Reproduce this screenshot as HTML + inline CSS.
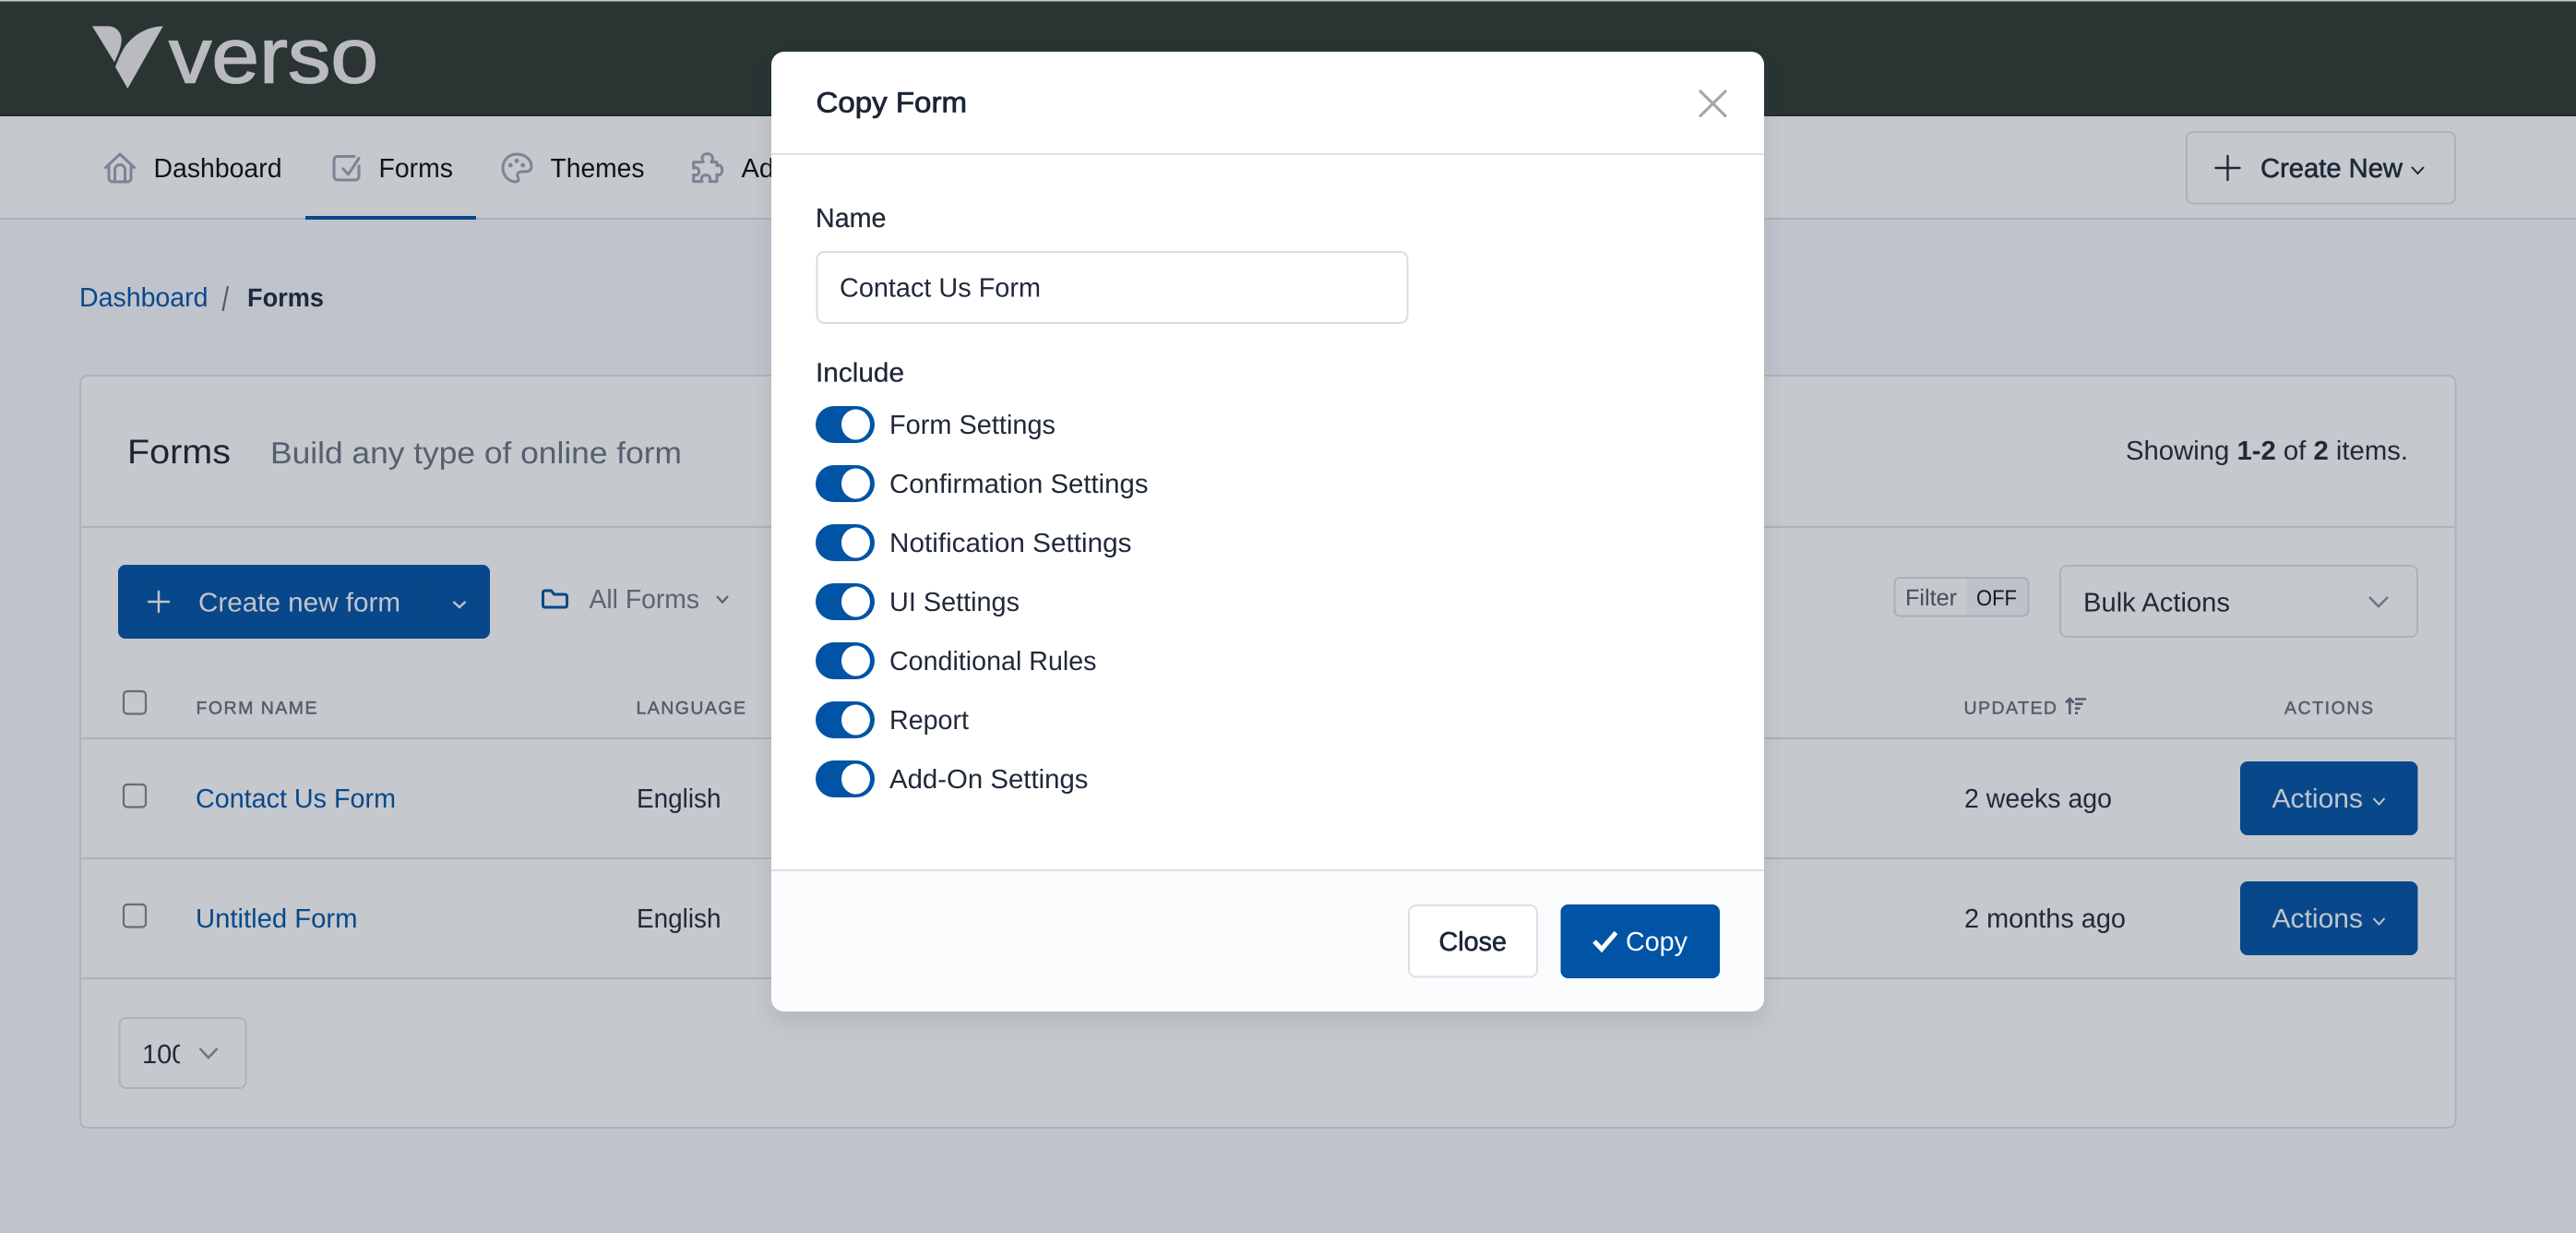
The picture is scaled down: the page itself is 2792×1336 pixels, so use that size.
<!DOCTYPE html>
<html lang="en">
<head>
<meta charset="utf-8">
<title>Verso - Forms</title>
<style>
html,body{margin:0;padding:0;background:#bfc3cc}
body{width:2792px;height:1336px;overflow:hidden;position:relative;font-family:"Liberation Sans",Arial,sans-serif}
svg{position:absolute;left:0;top:0;display:block}
svg text{font-family:"Liberation Sans",Arial,sans-serif;white-space:pre;text-rendering:geometricPrecision}
.m{stroke-width:.6px}
.modal{position:absolute;left:836px;top:56px;width:1076px;height:1040px;background:#fff;border-radius:14px;overflow:hidden;box-shadow:0 12px 24px rgba(60,65,80,.12)}
.icon{fill:none;stroke:#7a8494;stroke-width:3;stroke-linecap:round;stroke-linejoin:round}
</style>
</head>
<body>
<svg width="2792" height="1336" viewBox="0 0 2792 1336" xmlns="http://www.w3.org/2000/svg">
  <defs>
    <clipPath id="c100"><rect x="150" y="1120" width="45" height="45"/></clipPath>
  </defs>
  <rect width="2792" height="1336" fill="#bfc3cc"/>

  <!-- header -->
  <rect width="2792" height="125" fill="#293433"/>
  <rect width="2792" height="1.5" fill="#c3c6ca"/>
  <rect y="124" width="2792" height="2" fill="#202b3a"/>
  <g transform="translate(80 10) scale(.33333)" fill="#b9bbbe">
    <path d="M60 55H112C140 55 156 78 155 102C154 125 142 150 132 172Z"/>
    <path d="M290 55C232 56 182 92 160 132C150 150 142 168 135 188L175 258Z"/>
  </g>
  <text x="183" y="89.500" font-size="85" fill="#b9bbbe" stroke="#b9bbbe" stroke-width="1.400" textLength="227" lengthAdjust="spacingAndGlyphs">verso</text>

  <!-- nav -->
  <rect y="126" width="2792" height="111" fill="#c5c8cd"/>
  <rect y="236" width="2792" height="2" fill="#adb2ba"/>
  <rect x="331" y="234" width="185" height="4" fill="#08488a"/>
  <path class="icon" d="M114.500 181.500L130 167L145.500 181.500M118 178V193a4 4 0 0 0 4 4H138a4 4 0 0 0 4-4V178M124.500 197V184a5.500 5.500 0 0 1 11 0V197"/>
  <text x="166.500" y="192" font-size="29" fill="#111318" textLength="139" lengthAdjust="spacingAndGlyphs">Dashboard</text>
  <path class="icon" d="M384 169.500H366a4 4 0 0 0-4 4V191a4 4 0 0 0 4 4H385a4 4 0 0 0 4-4V180"/>
  <path class="icon" stroke-width="2.500" d="M372 183L377.500 189L389 171.500"/>
  <text x="410.500" y="192" font-size="29" fill="#111318" textLength="80.500" lengthAdjust="spacingAndGlyphs">Forms</text>
  <path class="icon" d="M560 167C551 167 545 174 545 182C545 190 551 197 559 197C563 197 562 193 561 191C560 187 563 186 566 186L570 186C573 186 576 184 576 180.500C576 172 568 167 560 167Z"/>
  <circle cx="553.300" cy="179" r="2.400" fill="#7a8494"/><circle cx="560" cy="174.300" r="2.400" fill="#7a8494"/><circle cx="566.700" cy="179" r="2.400" fill="#7a8494"/>
  <text x="596.500" y="192" font-size="29" fill="#111318" textLength="102" lengthAdjust="spacingAndGlyphs">Themes</text>
  <g transform="translate(535 155) scale(.33333)">
    <path class="icon" style="stroke-width:9" d="M665 62H682C672 45 682 35 695 35C708 35 718 45 708 62H726V74C735 68 743 76 743 88C743 100 735 108 726 102V125H702C708 112 700 104 690 104C680 104 672 112 678 125H650V103C662 108 668 100 668 92C668 84 660 76 650 82V62Z"/>
  </g>
  <text x="803.500" y="192" font-size="29" fill="#111318">Add-Ons</text>

  <!-- create new -->
  <rect x="2370" y="143" width="291" height="77.500" rx="7" fill="#c5c8cd" stroke="#adb2ba" stroke-width="2"/>
  <path d="M2414.500 169V195M2401.500 182H2427.500" stroke="#1f2937" stroke-width="2.400" stroke-linecap="round" fill="none"/>
  <text x="2450" y="192" font-size="29" fill="#1e2838" class="m" stroke="#1e2838" textLength="154" lengthAdjust="spacingAndGlyphs">Create New</text>
  <path d="M2614 181L2620.500 188L2627 181" fill="none" stroke="#1f2937" stroke-width="2"/>

  <!-- breadcrumb -->
  <text x="86" y="332" font-size="29" fill="#08488a" textLength="139.500" lengthAdjust="spacingAndGlyphs">Dashboard</text>
  <path d="M247 310L241.500 337" stroke="#525c6b" stroke-width="2.200"/>
  <text x="268" y="332" font-size="28" font-weight="bold" fill="#1f2939" textLength="83" lengthAdjust="spacingAndGlyphs">Forms</text>

  <!-- card -->
  <rect x="87" y="407" width="2574.500" height="815" rx="8" fill="#c5c8cd" stroke="#adb2ba" stroke-width="2"/>
  <rect x="87" y="570" width="2574" height="2" fill="#adb2ba"/>
  <text x="138" y="502" font-size="37" fill="#1b2535" textLength="112" lengthAdjust="spacingAndGlyphs">Forms</text>
  <text x="293" y="502" font-size="33" fill="#555f6f" textLength="446" lengthAdjust="spacingAndGlyphs">Build any type of online form</text>
  <text x="2304" y="498" font-size="29" fill="#1f2939" textLength="306" lengthAdjust="spacingAndGlyphs">Showing <tspan font-weight="bold">1-2</tspan> of <tspan font-weight="bold">2</tspan> items.</text>

  <!-- toolbar -->
  <rect x="128" y="612" width="403" height="80" rx="8" fill="#08488a"/>
  <rect x="466" y="612" width="1" height="80" fill="#0a4480"/>
  <path d="M172 641V663M161 652H183" stroke="#c1c5cd" stroke-width="2.400" stroke-linecap="round" fill="none"/>
  <text x="215" y="662.500" font-size="29" fill="#c1c5cd" textLength="219" lengthAdjust="spacingAndGlyphs">Create new form</text>
  <path d="M491.500 652L498 658L504.500 652" fill="none" stroke="#c1c5cd" stroke-width="2.300"/>
  <path d="M588.500 642a2 2 0 0 1 2-2h7l3 4h12a2 2 0 0 1 2 2v10a2 2 0 0 1-2 2h-22a2 2 0 0 1-2-2z" fill="none" stroke="#08488a" stroke-width="3" stroke-linejoin="round"/>
  <text x="638.500" y="659" font-size="29" fill="#5c6472" textLength="119.500" lengthAdjust="spacingAndGlyphs">All Forms</text>
  <path d="M777 646L783 652.500L789 646" fill="none" stroke="#5c6472" stroke-width="2.300"/>

  <rect x="2053.500" y="626" width="145" height="41.500" rx="6" fill="#c5c8cd" stroke="#a9afb8" stroke-width="2"/>
  <path d="M2132 627H2192a5.500 5.500 0 0 1 5.500 5.500v28.500a5.500 5.500 0 0 1-5.500 5.500H2132Z" fill="#bdc2ca"/>
  <text x="2065" y="656" font-size="25" fill="#454e5c" textLength="56" lengthAdjust="spacingAndGlyphs">Filter</text>
  <text x="2142" y="656" font-size="24" fill="#15191f" textLength="44" lengthAdjust="spacingAndGlyphs">OFF</text>

  <rect x="2233" y="613" width="387" height="77" rx="7" fill="#c5c8cd" stroke="#adb2ba" stroke-width="2"/>
  <text x="2258" y="662.500" font-size="29" fill="#1f2939" textLength="159" lengthAdjust="spacingAndGlyphs">Bulk Actions</text>
  <path d="M2568 647L2578 657L2588 647" fill="none" stroke="#6e7786" stroke-width="2.600"/>

  <!-- table head -->
  <rect x="134" y="749" width="24" height="24.500" rx="4" fill="none" stroke="#686e78" stroke-width="2.200"/>
  <g font-size="19.500" fill="#535d6c" stroke="#535d6c" stroke-width=".5">
    <text x="212.500" y="773.500" textLength="131" lengthAdjust="spacing">FORM NAME</text>
    <text x="689.500" y="773.500" textLength="118.500" lengthAdjust="spacing">LANGUAGE</text>
    <text x="2128.500" y="773.500" textLength="100.500" lengthAdjust="spacing">UPDATED</text>
    <text x="2476" y="773.500" textLength="96" lengthAdjust="spacing">ACTIONS</text>
  </g>
  <path d="M2243.300 774V757.500M2239 761.500L2243.300 757L2247.600 761.500" fill="none" stroke="#535d6c" stroke-width="2.600"/>
  <path d="M2249 757.500H2261M2249 762.700H2257.500M2249 767.700H2254.500M2249 772.700H2252" fill="none" stroke="#535d6c" stroke-width="2.600"/>

  <!-- rows -->
  <rect x="87" y="799" width="2574" height="2" fill="#adb2ba"/>
  <rect x="87" y="929" width="2574" height="2" fill="#adb2ba"/>
  <rect x="87" y="1059" width="2574" height="2" fill="#adb2ba"/>

  <rect x="134" y="850" width="24" height="24.500" rx="4" fill="none" stroke="#686e78" stroke-width="2.200"/>
  <text x="212" y="875" font-size="29" fill="#08488a" textLength="217" lengthAdjust="spacingAndGlyphs">Contact Us Form</text>
  <text x="690" y="875" font-size="29" fill="#1f2939" textLength="91.500" lengthAdjust="spacingAndGlyphs">English</text>
  <text x="2129" y="875" font-size="29" fill="#1f2939" textLength="160" lengthAdjust="spacingAndGlyphs">2 weeks ago</text>
  <rect x="2428" y="825" width="192.500" height="80" rx="8" fill="#08488a"/>
  <text x="2462.500" y="875" font-size="29" fill="#c1c5cd" textLength="98.500" lengthAdjust="spacingAndGlyphs">Actions</text>
  <path d="M2572.500 865L2578.500 871.500L2584.500 865" fill="none" stroke="#c1c5cd" stroke-width="2"/>

  <rect x="134" y="980" width="24" height="24.500" rx="4" fill="none" stroke="#686e78" stroke-width="2.200"/>
  <text x="212" y="1005" font-size="29" fill="#08488a" textLength="175.500" lengthAdjust="spacingAndGlyphs">Untitled Form</text>
  <text x="690" y="1005" font-size="29" fill="#1f2939" textLength="91.500" lengthAdjust="spacingAndGlyphs">English</text>
  <text x="2129" y="1005" font-size="29" fill="#1f2939" textLength="175" lengthAdjust="spacingAndGlyphs">2 months ago</text>
  <rect x="2428" y="955" width="192.500" height="80" rx="8" fill="#08488a"/>
  <text x="2462.500" y="1005" font-size="29" fill="#c1c5cd" textLength="98.500" lengthAdjust="spacingAndGlyphs">Actions</text>
  <path d="M2572.500 995L2578.500 1001.500L2584.500 995" fill="none" stroke="#c1c5cd" stroke-width="2"/>

  <!-- page size -->
  <rect x="129.500" y="1103" width="137" height="76" rx="7" fill="#c5c8cd" stroke="#adb2ba" stroke-width="2"/>
  <text x="154" y="1152" font-size="29" fill="#1f2939" clip-path="url(#c100)">100</text>
  <path d="M216.500 1136L226 1146L235.500 1136" fill="none" stroke="#6e7786" stroke-width="2.600"/>
</svg>

<div class="modal">
  <svg width="1076" height="1040" viewBox="836 56 1076 1040" xmlns="http://www.w3.org/2000/svg">
    <rect x="836" y="943" width="1076" height="153" fill="#fbfcfe"/>
    <rect x="836" y="166" width="1076" height="2" fill="#dde1e7"/>
    <rect x="836" y="942" width="1076" height="2" fill="#dde1e7"/>

    <text x="884.500" y="121.500" font-size="31" fill="#1b2535" stroke="#1b2535" stroke-width=".8" textLength="163.500" lengthAdjust="spacingAndGlyphs">Copy Form</text>
    <path d="M1843 99L1870 125.500M1870 99L1843 125.500" stroke="#a3a7ae" stroke-width="3.200" stroke-linecap="round" fill="none"/>

    <text x="884" y="246" font-size="29" fill="#1f2939" stroke="#1f2939" stroke-width=".3" textLength="76.500" lengthAdjust="spacingAndGlyphs">Name</text>
    <rect x="885.500" y="273" width="640" height="77" rx="8" fill="#fff" stroke="#d8dce3" stroke-width="2"/>
    <text x="910" y="321.500" font-size="29" fill="#1f2939" textLength="218" lengthAdjust="spacingAndGlyphs">Contact Us Form</text>

    <text x="884" y="413.500" font-size="29" fill="#1f2939" stroke="#1f2939" stroke-width=".3" textLength="96" lengthAdjust="spacingAndGlyphs">Include</text>

    <g fill="#0153a5">
      <rect x="884" y="440" width="64" height="40" rx="20"/>
      <rect x="884" y="504" width="64" height="40" rx="20"/>
      <rect x="884" y="568" width="64" height="40" rx="20"/>
      <rect x="884" y="632" width="64" height="40" rx="20"/>
      <rect x="884" y="696" width="64" height="40" rx="20"/>
      <rect x="884" y="760" width="64" height="40" rx="20"/>
      <rect x="884" y="824" width="64" height="40" rx="20"/>
    </g>
    <g fill="#fff">
      <ellipse cx="927.500" cy="460" rx="15.500" ry="16.500"/>
      <ellipse cx="927.500" cy="524" rx="15.500" ry="16.500"/>
      <ellipse cx="927.500" cy="588" rx="15.500" ry="16.500"/>
      <ellipse cx="927.500" cy="652" rx="15.500" ry="16.500"/>
      <ellipse cx="927.500" cy="716" rx="15.500" ry="16.500"/>
      <ellipse cx="927.500" cy="780" rx="15.500" ry="16.500"/>
      <ellipse cx="927.500" cy="844" rx="15.500" ry="16.500"/>
    </g>
    <g font-size="29" fill="#1f2939">
      <text x="964" y="470" textLength="180" lengthAdjust="spacingAndGlyphs">Form Settings</text>
      <text x="964" y="534" textLength="280.500" lengthAdjust="spacingAndGlyphs">Confirmation Settings</text>
      <text x="964" y="598" textLength="262.500" lengthAdjust="spacingAndGlyphs">Notification Settings</text>
      <text x="964" y="662" textLength="141" lengthAdjust="spacingAndGlyphs">UI Settings</text>
      <text x="964" y="726" textLength="224.500" lengthAdjust="spacingAndGlyphs">Conditional Rules</text>
      <text x="964" y="790" textLength="86" lengthAdjust="spacingAndGlyphs">Report</text>
      <text x="964" y="854" textLength="215.500" lengthAdjust="spacingAndGlyphs">Add-On Settings</text>
    </g>

    <rect x="1527" y="981" width="139" height="77.500" rx="8" fill="#fff" stroke="#dbdfe5" stroke-width="2"/>
    <text x="1559.500" y="1030" font-size="29" fill="#1b2535" class="m" stroke="#1b2535" textLength="73.500" lengthAdjust="spacingAndGlyphs">Close</text>
    <rect x="1691.500" y="980" width="172.500" height="80" rx="8" fill="#0153a5"/>
    <path d="M1728 1020L1736 1028.500L1751.500 1010.500" fill="none" stroke="#fff" stroke-width="5"/>
    <text x="1762" y="1030" font-size="29" fill="#fff" textLength="67" lengthAdjust="spacingAndGlyphs">Copy</text>
  </svg>
</div>
</body>
</html>
